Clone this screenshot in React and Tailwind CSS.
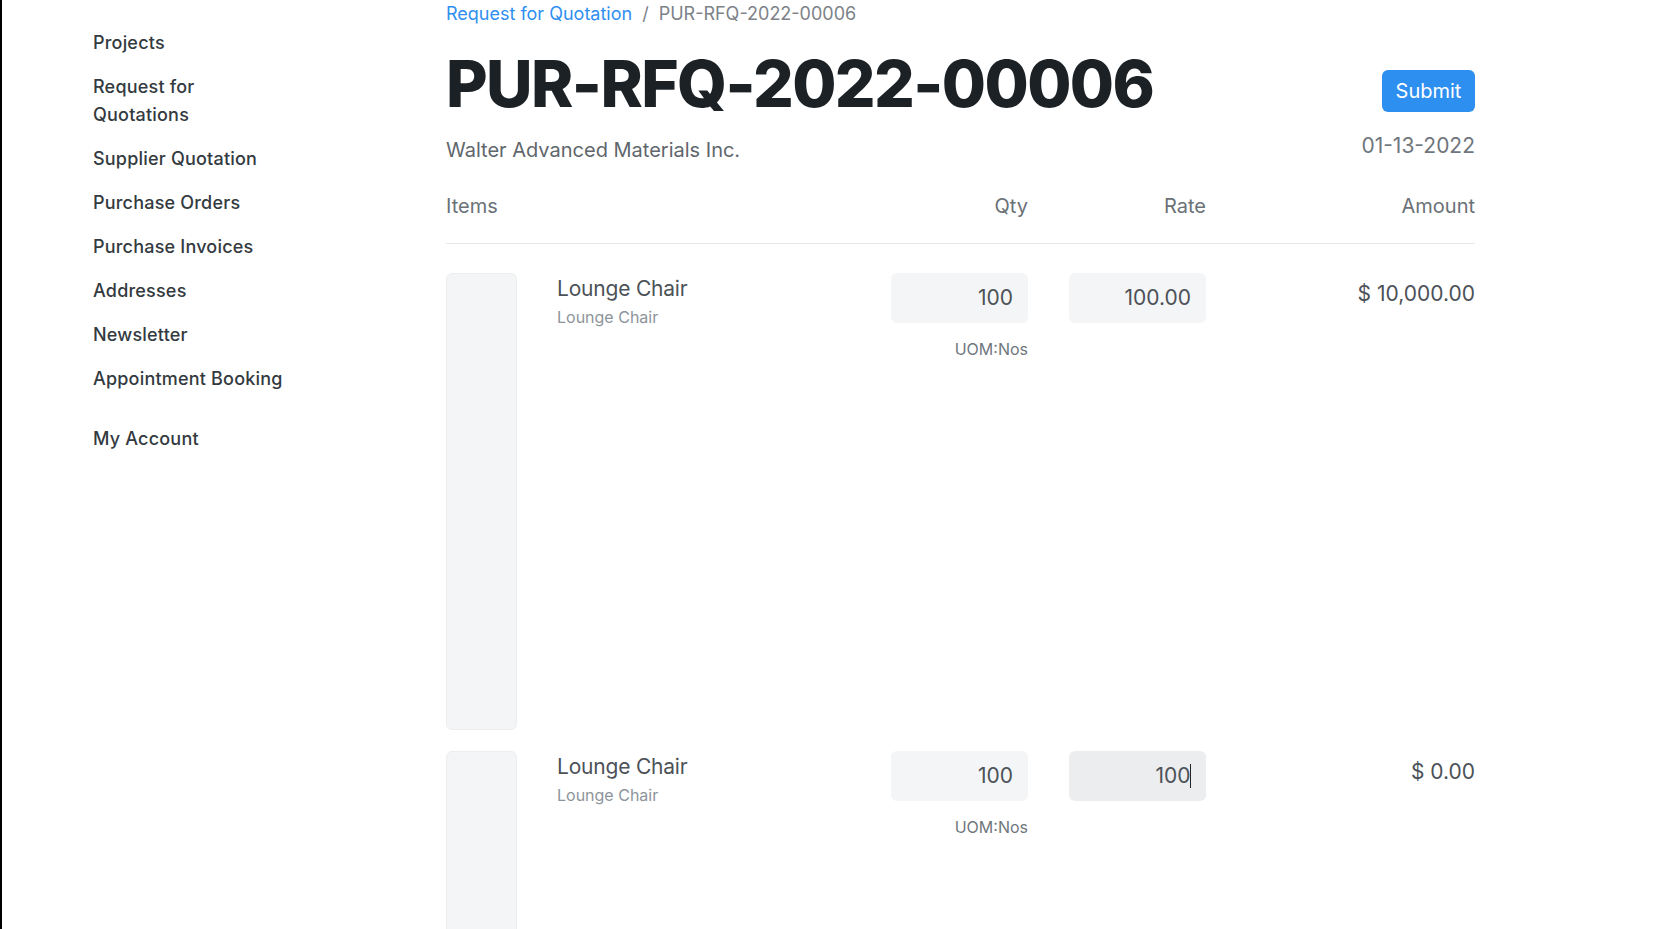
import React from "react";

const nav = [
  "Projects",
  "Request for\nQuotations",
  "Supplier Quotation",
  "Purchase Orders",
  "Purchase Invoices",
  "Addresses",
  "Newsletter",
  "Appointment Booking",
];

function Row({ qty, rate, amount, focused }) {
  return (
    <div className="flex">
      <div className="w-[71px] h-[457px] shrink-0 rounded-[6px] border border-[#eceef0] bg-[#f4f5f6]" />
      <div className="ml-[40px] flex-1 pt-[2px]">
        <div className="text-[21px] leading-[28px] text-[#4c5258] tracking-[-0.2px]">Lounge Chair</div>
        <div className="mt-[3px] text-[16px] leading-[22px] text-[#8d949a]">Lounge Chair</div>
      </div>
      <div className="w-[137px] flex flex-col items-end">
        <div className="w-full h-[50px] rounded-[6px] bg-[#f4f5f6] flex items-center justify-end pr-[15px] text-[21px] text-[#4c5258]">
          {qty}
        </div>
        <div className="mt-[15px] text-[16px] leading-[22px] text-[#6f767d]">UOM:Nos</div>
      </div>
      <div className="ml-[41px] w-[137px]">
        <div
          className={
            "w-full h-[50px] rounded-[6px] flex items-center justify-end pr-[15px] text-[21px] text-[#4c5258] " +
            (focused ? "bg-[#ebedef]" : "bg-[#f4f5f6]")
          }
        >
          {rate}
          {focused && <span className="inline-block w-[1.5px] h-[24px] bg-[#222] -ml-[1px]" />}
        </div>
      </div>
      <div className="w-[269px] text-right pt-[7px] text-[21px] leading-[28px] text-[#4c5258]">{amount}</div>
    </div>
  );
}

export default function App() {
  return (
    <div
      className="h-screen overflow-hidden border-l-2 border-black bg-white flex"
      style={{ fontFamily: "Inter, 'Noto Sans', sans-serif" }}
    >
      <aside className="w-[444px] shrink-0 pl-[91px] pt-[29px]">
        <nav className="flex flex-col gap-[16px]">
          {nav.map((n) => (
            <div
              key={n}
              className="text-[18px] leading-[28px] font-medium text-[#333a40] tracking-[0.2px] whitespace-pre-line"
            >
              {n}
            </div>
          ))}
          <div className="mt-4 text-[18px] leading-[28px] font-medium text-[#333a40] tracking-[0.2px]">My Account</div>
        </nav>
      </aside>
      <main className="w-[1029px] shrink-0 pt-[1px]">
        <div className="text-[18px] leading-[26px] text-[#7c8288]">
          <span className="text-[#2f8ff0]">Request for Quotation</span>
          <span className="mx-[10px]">/</span>
          <span>PUR-RFQ-2022-00006</span>
        </div>
        <div className="mt-[24px] flex justify-between items-start">
          <h1 className="text-[64px] leading-[66px] font-extrabold text-[#1c2126] tracking-[-1.6px]">
            PUR-RFQ-2022-00006
          </h1>
          <button className="mt-[19px] h-[42px] w-[93px] rounded-[6px] bg-[#2d8ff0] text-white text-[20px]">
            Submit
          </button>
        </div>
        <div className="mt-[15px] flex justify-between items-start">
          <div className="pt-[4px] text-[20px] leading-[28px] text-[#5f666c]">Walter Advanced Materials Inc.</div>
          <div className="text-[21px] leading-[28px] text-[#6f767d]">01-13-2022</div>
        </div>
        <div className="mt-[28px] pb-[23px] border-b border-[#e7e9eb] flex text-[20px] leading-[28px] text-[#6a7177]">
          <div className="flex-1">Items</div>
          <div className="w-[137px] text-right">Qty</div>
          <div className="ml-[41px] w-[137px] text-right">Rate</div>
          <div className="w-[269px] text-right">Amount</div>
        </div>
        <div className="mt-[29px] flex flex-col gap-[21px]">
          <Row qty="100" rate="100.00" amount="$ 10,000.00" />
          <Row qty="100" rate="100" amount="$ 0.00" focused />
        </div>
      </main>
    </div>
  );
}
